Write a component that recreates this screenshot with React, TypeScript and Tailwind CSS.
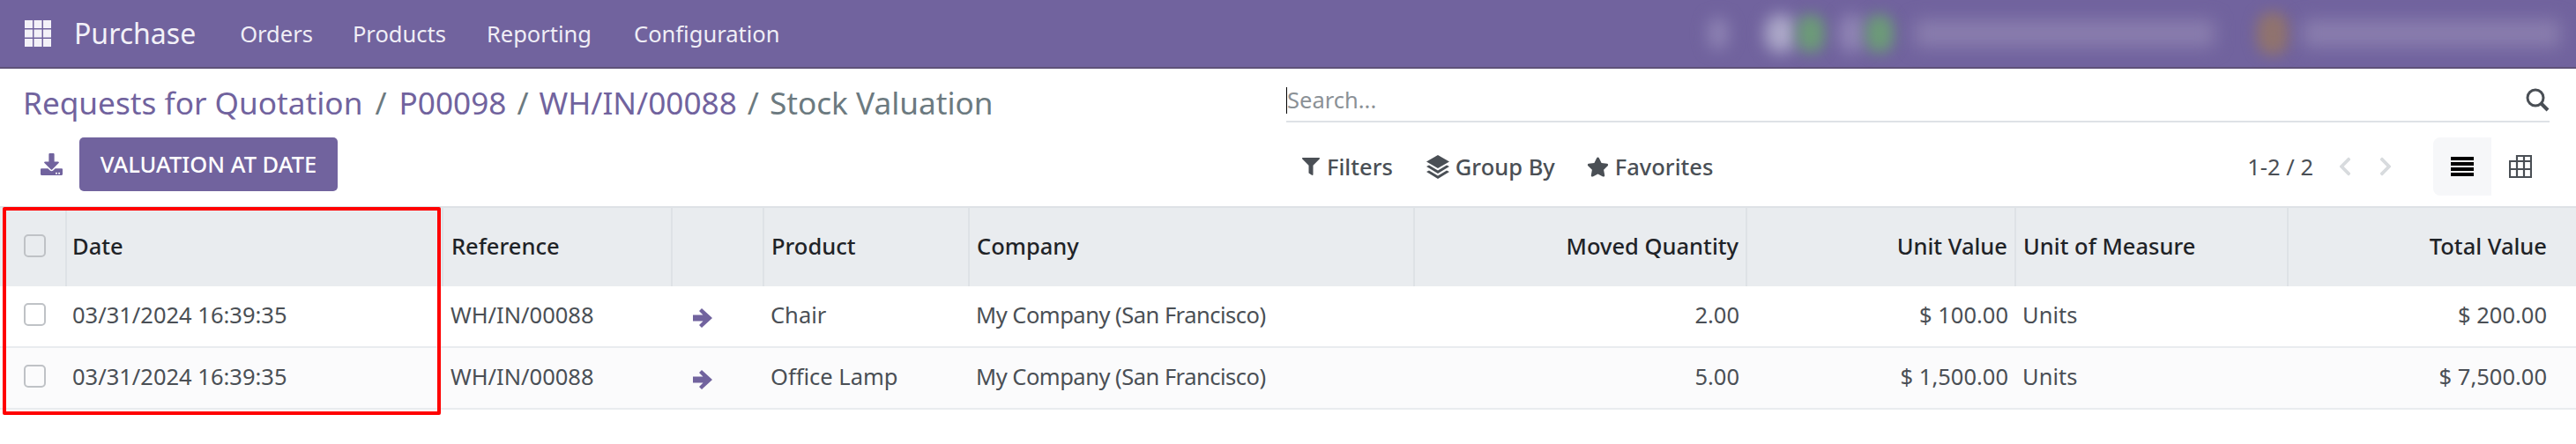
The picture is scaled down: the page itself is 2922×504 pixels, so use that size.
import React from 'react';
import {
  FaChevronLeft,
  FaChevronRight,
  FaDownload,
  FaFilter,
  FaStar,
} from 'react-icons/fa';

const rows = [
  { date: '03/31/2024 16:39:35', ref: 'WH/IN/00088', product: 'Chair', qty: '2.00', unit: '$ 100.00', total: '$ 200.00', h: 'h-[69px]' },
  { date: '03/31/2024 16:39:35', ref: 'WH/IN/00088', product: 'Office Lamp', qty: '5.00', unit: '$ 1,500.00', total: '$ 7,500.00', h: 'h-[70px]' },
];

function Check() {
  return <div className="ml-[27px] h-[26px] w-[25px] rounded-[5px] border-2 border-[#bfc2c6]" />;
}

function AppsIcon() {
  return (
    <svg width="30" height="30" viewBox="0 0 30 30" className="ml-[28px] fill-[#f3f1f8]">
      {[0, 10.5, 21].map((y) =>
        [0, 10.5, 21].map((x) => <rect key={`${x}-${y}`} x={x} y={y} width="9" height="9" />),
      )}
    </svg>
  );
}

function GroupIcon() {
  return (
    <svg width="26" height="27" viewBox="0 0 26 27" className="fill-[#4a4f55]">
      <path d="M13 0 26 7.5 13 15 0 7.5Z" />
      <path d="M0 13 3 11.5 13 17.5 23 11.5 26 13 13 21Z" />
      <path d="M0 19 3 17.5 13 23.5 23 17.5 26 19 13 27Z" />
    </svg>
  );
}

function PivotIcon() {
  return (
    <svg width="26" height="26" viewBox="0 0 26 26" fill="none" className="stroke-[#4a4f55] stroke-[2.2]">
      <path d="M9 7V1H25V25H1V7H25" />
      <path d="M1 16H25M9 7V25M17 1V25" />
    </svg>
  );
}

function BarsIcon() {
  return (
    <svg width="26" height="22" viewBox="0 0 26 22" className="fill-black">
      <rect y="0" width="26" height="4" />
      <rect y="6" width="26" height="4" />
      <rect y="12" width="26" height="4" />
      <rect y="18" width="26" height="4" />
    </svg>
  );
}

function SearchIcon() {
  return (
    <svg width="27" height="27" viewBox="0 0 27 27" fill="none" className="stroke-[#4a4f55]">
      <circle cx="11" cy="11" r="9" strokeWidth="3" />
      <path d="M17.5 17.5 25 25" strokeWidth="4" />
    </svg>
  );
}

function ArrowIcon() {
  return (
    <svg width="22" height="22" viewBox="0 0 22 22" className="mt-[7px] fill-[#71639e]">
      <path d="M10 0 22 11 10 22 7 19 11.5 14.5H0V7.5H11.5L7 3Z" />
    </svg>
  );
}

export default function App() {
  return (
    <div className="relative h-[504px] w-[2922px] overflow-hidden bg-white font-['Noto_Sans',sans-serif] text-[25.5px] text-[#4a4f55]">
      {/* Navbar */}
      <div className="flex h-[78px] items-center border-b-2 border-[#5f5279] bg-[#71639e] text-[#f0eef6]">
        <AppsIcon />
        <span className="ml-[26px] text-[32px] text-[#f3f1f8]">Purchase</span>
        <span className="ml-[50px]">Orders</span>
        <span className="ml-[45px]">Products</span>
        <span className="ml-[46px]">Reporting</span>
        <span className="ml-[48px]">Configuration</span>
        {/* Blurred systray */}
        <div className="ml-auto mr-[18px] flex h-[40px] items-center">
          <div className="h-[36px] w-[22px] rounded-full bg-[#8f84b4] blur-[9px]" />
          <div className="ml-[42px] h-[44px] w-[36px] rounded-full bg-[#aca8c8] blur-[9px]" />
          <div className="h-[44px] w-[32px] rounded-full bg-[#6c9b78] blur-[8px]" />
          <div className="ml-[16px] h-[44px] w-[30px] rounded-full bg-[#8f84b4] blur-[9px]" />
          <div className="h-[44px] w-[32px] rounded-full bg-[#6c9b78] blur-[8px]" />
          <div className="ml-[24px] h-[30px] w-[340px] bg-[#8a7eae] blur-[10px]" />
          <div className="ml-[48px] h-[50px] w-[36px] rounded-full bg-[#90736e] blur-[8px]" />
          <div className="ml-[16px] h-[30px] w-[292px] bg-[#8a7eae] blur-[10px]" />
        </div>
      </div>

      {/* Control panel */}
      <div className="flex h-[158px] border-b-2 border-[#dee2e6]">
        <div className="w-[1459px] shrink-0">
          <div className="mt-[15px] flex h-[46px] items-center pl-[26px] text-[35.2px] text-[#71639e]">
            <span>Requests for Quotation</span>
            <span className="mx-[14px] text-[#6c7a80]">/</span>
            <span>P00098</span>
            <span className="mx-[12px] text-[#6c7a80]">/</span>
            <span>WH/IN/00088</span>
            <span className="mx-[12px] text-[#6c7a80]">/</span>
            <span className="text-[#6c7a80]">Stock Valuation</span>
          </div>
          <div className="mt-[17px] flex items-center">
            <FaDownload className="ml-[46px] text-[25px] text-[#71639e]" />
            <button className="ml-[19px] h-[61px] w-[293px] rounded-[5px] bg-[#71639e] text-[25.5px] font-medium text-white">
              VALUATION AT DATE
            </button>
          </div>
        </div>
        <div className="mr-[30px] flex-1">
          <div className="mt-[12px] flex h-[49px] items-center justify-between border-b-2 border-[#dee2e6]">
            <div className="flex h-[30px] items-center border-l border-black text-[#8b9196]">Search...</div>
            <SearchIcon />
          </div>
          <div className="mt-[17px] flex h-[66px] items-center">
            <div className="ml-[18px] flex items-center gap-[8px] font-medium">
              <FaFilter className="text-[20px]" />
              <span>Filters</span>
            </div>
            <div className="ml-[38px] flex items-center gap-[7px] font-medium">
              <GroupIcon />
              <span>Group By</span>
            </div>
            <div className="ml-[36px] flex items-center gap-[7px] font-medium">
              <FaStar className="text-[25px]" />
              <span>Favorites</span>
            </div>
            <span className="ml-auto">1-2 / 2</span>
            <FaChevronLeft className="ml-[24px] text-[24px] text-[#d8dbde]" />
            <FaChevronRight className="ml-[22px] text-[24px] text-[#d8dbde]" />
            <div className="ml-[42px] flex h-[66px] w-[66px] items-center justify-center rounded-l-[8px] bg-[#f6f7f9]">
              <BarsIcon />
            </div>
            <div className="flex h-[66px] w-[66px] items-center justify-center">
              <PivotIcon />
            </div>
          </div>
        </div>
      </div>

      {/* List */}
      <table className="w-[2922px] table-fixed border-collapse">
        <colgroup>
          <col className="w-[75px]" />
          <col className="w-[427px]" />
          <col className="w-[260px]" />
          <col className="w-[104px]" />
          <col className="w-[233px]" />
          <col className="w-[505px]" />
          <col className="w-[377px]" />
          <col className="w-[305px]" />
          <col className="w-[309px]" />
          <col className="w-[327px]" />
        </colgroup>
        <thead>
          <tr className="h-[89px] bg-[#e9ecef] text-[#1f2327] [&>th]:pb-[3px]">
            <th className="p-0"><Check /></th>
            <th className="border-l-2 border-[#dee2e6] pl-[6px] text-left font-medium">Date</th>
            <th className="border-l-2 border-[#dee2e6] pl-[9px] text-left font-medium">Reference</th>
            <th className="border-l-2 border-[#dee2e6]" />
            <th className="border-l-2 border-[#dee2e6] pl-[8px] text-left font-medium">Product</th>
            <th className="border-l-2 border-[#dee2e6] pl-[8px] text-left font-medium">Company</th>
            <th className="border-l-2 border-[#dee2e6] pr-[8px] text-right font-medium">Moved Quantity</th>
            <th className="border-l-2 border-[#dee2e6] pr-[8px] text-right font-medium">Unit Value</th>
            <th className="border-l-2 border-[#dee2e6] pl-[8px] text-left font-medium">Unit of Measure</th>
            <th className="border-l-2 border-[#dee2e6] pr-[33px] text-right font-medium">Total Value</th>
          </tr>
        </thead>
        <tbody>
          {rows.map((row, i) => (
            <tr key={i} className={`${row.h} border-b-2 border-[#e9ecef] [&>td]:pb-[4px] ${i === 1 ? 'bg-[#fbfbfc]' : 'bg-white'}`}>
              <td className="p-0"><Check /></td>
              <td className="pl-[7px]">{row.date}</td>
              <td className="pl-[9px]">{row.ref}</td>
              <td className="pl-[24px]"><ArrowIcon /></td>
              <td className="pl-[8px]">{row.product}</td>
              <td className="pl-[8px] tracking-[-0.5px]">My Company (San Francisco)</td>
              <td className="pr-[8px] text-right">{row.qty}</td>
              <td className="pr-[8px] text-right">{row.unit}</td>
              <td className="pl-[8px]">Units</td>
              <td className="pr-[33px] text-right">{row.total}</td>
            </tr>
          ))}
        </tbody>
      </table>

      {/* Red highlight drawn over the screenshot */}
      <div className="absolute left-[3px] top-[235px] h-[236px] w-[497px] rounded-[2px] border-[4px] border-[#ff0000]" />
    </div>
  );
}
